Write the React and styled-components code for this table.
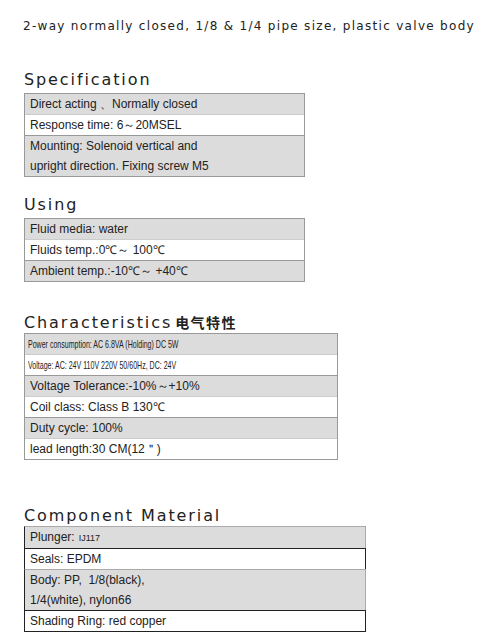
import React from "react";
import styled, { createGlobalStyle } from "styled-components";

const GlobalStyle = createGlobalStyle`
  body {
    margin: 0;
    background: #fff;
    font-family: "Liberation Sans", Arial, sans-serif;
    color: #222;
  }
`;

const Page = styled.div`
  width: 503px;
  height: 640px;
  padding: 18px 0 0 24px;
  box-sizing: border-box;
  overflow: hidden;
`;

const Lead = styled.div`
  font-family: "DejaVu Sans", Verdana, sans-serif;
  font-size: 12px;
  line-height: 16px;
  letter-spacing: 1.3px;
  margin-left: -1px;
  white-space: nowrap;
  color: #222;
`;

const Section = styled.section`
  margin-top: ${(p) => p.$top}px;
`;

const Title = styled.h2`
  margin: 0 0 ${(p) => p.$after}px;
  font-family: "DejaVu Sans", Verdana, sans-serif;
  font-weight: normal;
  font-size: 16px;
  line-height: 18px;
  letter-spacing: 1.9px;
  color: #222;
  white-space: nowrap;
`;

const Cn = styled.span`
  font-family: "Noto Sans CJK SC", sans-serif;
  font-weight: 700;
  font-size: 14px;
  letter-spacing: 1.5px;
  margin-left: 3px;
`;

const Table = styled.div`
  width: ${(p) => p.$width}px;
  box-sizing: border-box;
  border: 1px solid #999;
`;

const Row = styled.div`
  background: ${(p) => (p.$shade ? "#dcdcdc" : "#fff")};
  border-top: 1px solid ${(p) => (p.$shade ? "#999" : "#ccc")};
  &:first-child {
    border-top: none;
  }
  padding: 0 5px;
  font-size: 12px;
  line-height: 20px;
  white-space: nowrap;
`;

const Narrow = styled.span`
  display: inline-block;
  font-size: 11px;
  transform: scaleX(0.64);
  transform-origin: left center;
  margin-left: -2px;
`;

const MatTable = styled.div`
  width: 342px;
`;

const MatRow = styled.div`
  position: relative;
  background: ${(p) => (p.$shade ? "#dcdcdc" : "#fff")};
  border: 1px solid ${(p) => (p.$shade ? "#aaa" : "#222")};
  border-left-color: #222;
  margin-top: -1px;
  &:first-child {
    margin-top: 0;
  }
  padding: 0 5px;
  font-size: 12px;
  line-height: 20px;
  white-space: nowrap;
`;

const Tiny = styled.span`
  font-size: 9px;
  margin-left: 4px;
`;

export default function App() {
  return (
    <Page>
      <GlobalStyle />
      <Lead>2-way normally closed, 1/8 &amp; 1/4 pipe size, plastic valve body</Lead>

      <Section $top={37}>
        <Title $after={4}>Specification</Title>
        <Table $width={281}>
          <Row $shade>Direct acting 、Normally closed</Row>
          <Row>Response time: 6～20MSEL</Row>
          <Row $shade>
            Mounting: Solenoid vertical and
            <br />
            upright direction. Fixing screw M5
          </Row>
        </Table>
      </Section>

      <Section $top={19}>
        <Title $after={4}>Using</Title>
        <Table $width={281}>
          <Row $shade>Fluid media: water</Row>
          <Row>Fluids temp.:0℃～ 100℃</Row>
          <Row $shade>Ambient temp.:-10℃～ +40℃</Row>
        </Table>
      </Section>

      <Section $top={31}>
        <Title $after={1}>
          Characteristics<Cn>电气特性</Cn>
        </Title>
        <Table $width={314}>
          <Row $shade>
            <Narrow>Power consumption: AC 6.8VA (Holding) DC 5W</Narrow>
          </Row>
          <Row>
            <Narrow>Voltage: AC: 24V 110V 220V 50/60Hz, DC: 24V</Narrow>
          </Row>
          <Row $shade>Voltage Tolerance:-10%～+10%</Row>
          <Row>Coil class: Class B 130℃</Row>
          <Row $shade>Duty cycle: 100%</Row>
          <Row>lead length:30 CM(12＂)</Row>
        </Table>
      </Section>

      <Section $top={47}>
        <Title $after={1}>Component Material</Title>
        <MatTable>
          <MatRow $shade>
            Plunger:<Tiny>IJ117</Tiny>
          </MatRow>
          <MatRow>Seals: EPDM</MatRow>
          <MatRow $shade>
            Body: PP,&nbsp; 1/8(black),
            <br />
            1/4(white), nylon66
          </MatRow>
          <MatRow>Shading Ring: red copper</MatRow>
        </MatTable>
      </Section>
    </Page>
  );
}
